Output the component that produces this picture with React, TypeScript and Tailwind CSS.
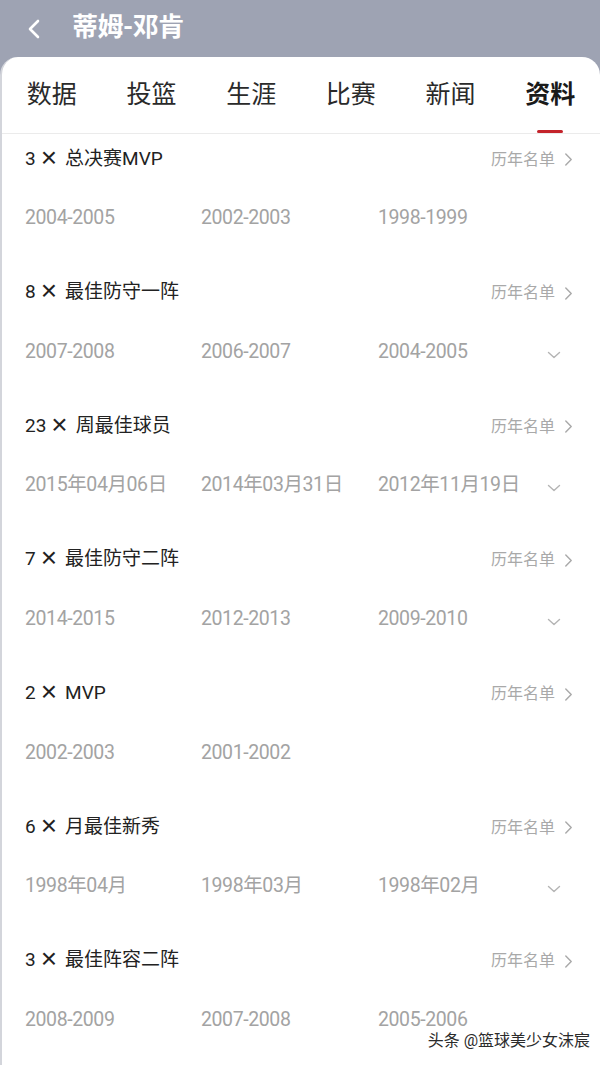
import React from 'react'

interface Honor {
  count: number
  name: string
  dates: Array<string>
  more?: boolean
}

const honors: Array<Honor> = [
  { count: 3, name: '总决赛MVP', dates: ['2004-2005', '2002-2003', '1998-1999'] },
  { count: 8, name: '最佳防守一阵', dates: ['2007-2008', '2006-2007', '2004-2005'], more: true },
  { count: 23, name: '周最佳球员', dates: ['2015年04月06日', '2014年03月31日', '2012年11月19日'], more: true },
  { count: 7, name: '最佳防守二阵', dates: ['2014-2015', '2012-2013', '2009-2010'], more: true },
  { count: 2, name: 'MVP', dates: ['2002-2003', '2001-2002'] },
  { count: 6, name: '月最佳新秀', dates: ['1998年04月', '1998年03月', '1998年02月'], more: true },
  { count: 3, name: '最佳阵容二阵', dates: ['2008-2009', '2007-2008', '2005-2006'] },
]

const tabs = ['数据', '投篮', '生涯', '比赛', '新闻', '资料']

const font = { fontFamily: "Roboto, 'Noto Sans CJK SC', sans-serif" }

const ChevronRight = ({ className }: { className?: string }) => (
  <svg className={className} viewBox="0 0 10 16" fill="none" stroke="currentColor" strokeWidth="1.6" strokeLinecap="round" strokeLinejoin="round">
    <path d="M2 2l6 6-6 6" />
  </svg>
)

const ChevronDown = () => (
  <svg className="w-[14px] h-[8px] text-[#b4b4b4]" viewBox="0 0 14 8" fill="none" stroke="currentColor" strokeWidth="1.4" strokeLinecap="round" strokeLinejoin="round">
    <path d="M1.5 1.5l5.5 5 5.5-5" />
  </svg>
)

const App: React.FC = () => {
  return (
    <div className="w-[600px] h-[1065px] bg-[#9ea3b3] overflow-hidden relative" style={font}>
      <div className="h-[57px] flex items-center">
        <svg className="ml-[27px] w-[14px] h-[20px] text-white" viewBox="0 0 14 20" fill="none" stroke="currentColor" strokeWidth="2.6" strokeLinecap="round" strokeLinejoin="round">
          <path d="M11 2l-8 8 8 8" />
        </svg>
        <div className="ml-[31px] text-[26px] font-bold text-white leading-none tracking-[-0.5px] -mt-[3px]">蒂姆-邓肯</div>
      </div>

      <div className="bg-white rounded-t-[18px] border-l-2 border-[#d3d5db] h-[1008px]">
        <div className="grid grid-cols-6 h-[77px] border-b border-[#ebebeb]">
          {tabs.map((tab, idx) => (
            <div key={'tab_' + idx} className="relative flex justify-center">
              <div className={'pt-[22px] text-[25px] leading-[32px] ' + (idx === 5 ? 'font-bold text-[#1a1a1a]' : 'text-[#2a2a2a]')}>
                {tab}
              </div>
              {idx === 5 && (
                <div className="absolute bottom-0 left-1/2 -translate-x-1/2 w-[26px] h-[3px] rounded-full bg-[#c4232b]" />
              )}
            </div>
          ))}
        </div>

        {honors.map((honor, idx) => (
          <div key={'honor_' + idx} className="h-[133.67px]">
            <div className="h-[48px] flex items-center justify-between pl-[23px] pr-[27px]">
              <div className="flex items-center text-[19px] text-[#222] leading-none">
                <span>{honor.count}</span>
                <span className="ml-[5px] mr-[8px] text-[28px] leading-[19px] font-['Liberation_Sans'] text-[#222] -mt-[2px]">×</span>
                <span>{honor.name}</span>
              </div>
              <div className="mt-[3px] flex items-center gap-[9px] text-[16px] text-[#a9a9a9]">
                <span>历年名单</span>
                <ChevronRight className="w-[9px] h-[15px] text-[#a9a9a9]" />
              </div>
            </div>
            <div className="h-[66px] flex items-center pl-[23px] pr-[39px]">
              <div className="mt-[5px] flex-1 grid grid-cols-[176px_177px_1fr] text-[19.5px] text-[#a3a3a3] tracking-[-0.4px]">
                {honor.dates.map((d, i) => (
                  <div key={'d_' + i}>{d}</div>
                ))}
              </div>
              {honor.more && (
                <div className="pt-[12px]">
                  <ChevronDown />
                </div>
              )}
            </div>
          </div>
        ))}
      </div>

      <div
        className="absolute right-[10px] bottom-[12px] text-[16px] text-[#2b2b2b]"
        style={{ textShadow: '0 0 2px #fff, 0 0 2px #fff' }}
      >
        头条 @篮球美少女沫宸
      </div>
    </div>
  )
}

export default App
